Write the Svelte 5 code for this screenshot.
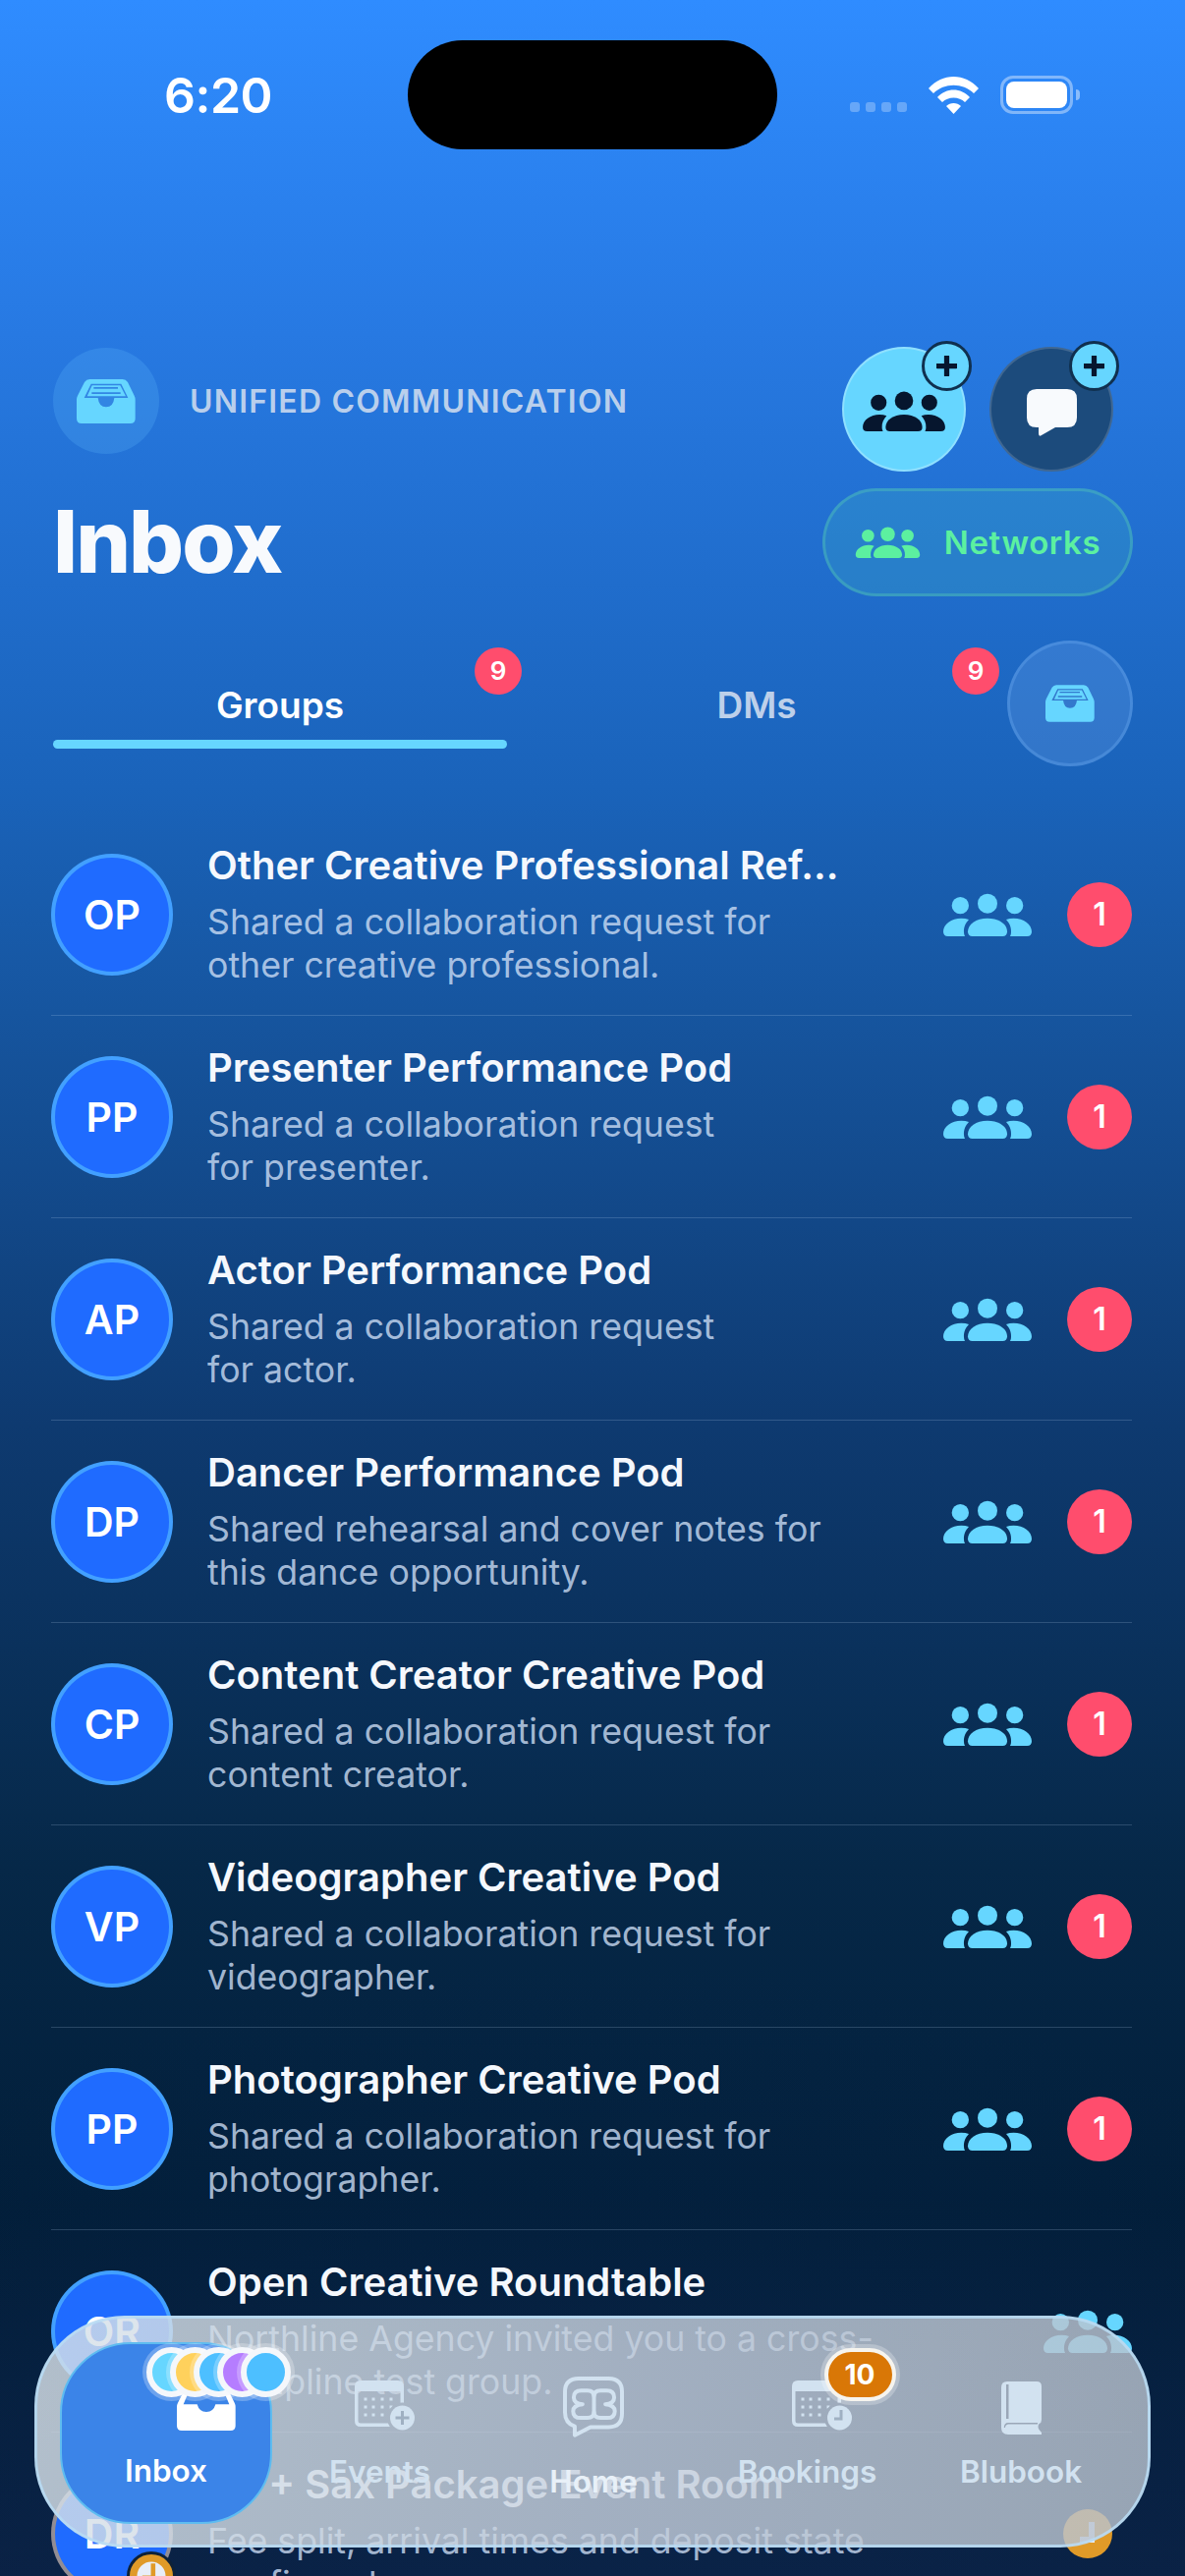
<script>
  const rows = [
    { code: "OP", title: "Other Creative Professional Ref...", sub: "Shared a collaboration request for\nother creative professional.", count: 1 },
    { code: "PP", title: "Presenter Performance Pod", sub: "Shared a collaboration request\nfor presenter.", count: 1 },
    { code: "AP", title: "Actor Performance Pod", sub: "Shared a collaboration request\nfor actor.", count: 1 },
    { code: "DP", title: "Dancer Performance Pod", sub: "Shared rehearsal and cover notes for\nthis dance opportunity.", count: 1 },
    { code: "CP", title: "Content Creator Creative Pod", sub: "Shared a collaboration request for\ncontent creator.", count: 1 },
    { code: "VP", title: "Videographer Creative Pod", sub: "Shared a collaboration request for\nvideographer.", count: 1 },
    { code: "PP", title: "Photographer Creative Pod", sub: "Shared a collaboration request for\nphotographer.", count: 1 },
    { code: "OR", title: "Open Creative Roundtable", sub: "Northline Agency invited you to a cross-\ndiscipline test group.", count: 0 },
    { code: "DR", title: "DJ + Sax Package Event Room", sub: "Fee split, arrival times and deposit state\nconfirmed.", count: 0, pending: true },
  ];

  const bubbles = ["#66d6ff", "#ffd15c", "#4dbfff", "#b57dff", "#4dbfff"];
</script>

{#snippet people(cls)}
  <svg class={cls} viewBox="0 0 270 132" aria-hidden="true">
    <circle cx="135" cy="32" r="30" />
    <circle cx="52" cy="38" r="26" />
    <circle cx="218" cy="38" r="26" />
    <path d="M75 118C75 95 100 77 135 77C170 77 195 95 195 118Q195 132 181 132H89Q75 132 75 118Z" />
    <path d="M0 118C0 95 25 77 55 77Q68 77 78 81C68 92 62 104 63 120Q63 127 66 132H14Q0 132 0 118Z" />
    <path d="M270 118C270 95 245 77 215 77Q202 77 192 81C202 92 208 104 207 120Q207 127 204 132H256Q270 132 270 118Z" />
  </svg>
{/snippet}

{#snippet tray(cls)}
  <svg class={cls} viewBox="0 0 180 135" aria-hidden="true">
    <path fill-rule="evenodd" d="M40 0H140Q150 0 156 9L176 50Q179 56 179 62V120Q179 135 164 135H15Q0 135 0 120V62Q0 56 3 50L24 9Q30 0 40 0Z
      M44 14H136L157 57H115Q112 85 90 85Q68 85 65 57H23Z
      M47 19H133L150 52H32Z
      M52 24H126V29H52Z
      M46 40H134V45H46Z" />
  </svg>
{/snippet}

{#snippet plus()}
  <span class="plus">
    <svg viewBox="0 0 20 20" aria-hidden="true"><path d="M10 1V19M1 10H19" /></svg>
  </span>
{/snippet}

{#snippet calendar(id, clock)}
  <svg class="cal" viewBox="0 0 62 51" aria-hidden="true">
    <mask {id}>
      <rect width="62" height="51" fill="#fff" />
      <circle cx="48.5" cy="38" r="15.5" fill="#000" />
    </mask>
    <g mask="url(#{id})">
      <path fill-rule="evenodd" d="M6 0H44Q50 0 50 6V41Q50 47 44 47H6Q0 47 0 41V6Q0 0 6 0ZM3.500 11V41Q3.500 43.500 6 43.500H44Q46.500 43.500 46.500 41V11Z" />
      {#each [19, 27, 35] as y}
        {#each [11, 19, 28, 37] as x}
          <rect x={x - 1.500} y={y - 1.500} width="3" height="3" />
        {/each}
      {/each}
    </g>
    <circle cx="48.500" cy="38" r="12.500" />
    {#if clock}
      <path class="cut" d="M50 30V39H43" />
    {:else}
      <path class="cut" d="M48.500 31V45M41.500 38H55.500" />
    {/if}
  </svg>
{/snippet}

<div class="screen">
  <div class="status">
    <span class="time">6:20</span>
    <div class="island"></div>
    <div class="sys">
      <div class="dots"><i></i><i></i><i></i><i></i></div>
      <svg class="wifi" viewBox="0 0 51 38" aria-hidden="true">
        <path d="M0 12C14 -4 37 -4 51 12L46 17C35 6 16 6 5 17Z" />
        <path d="M9 21C18 11 33 11 42 21L37 26C31 20 20 20 14 26Z" />
        <path d="M18 30C22 26 29 26 33 30L25.500 38Z" />
      </svg>
      <div class="battery"><b></b></div>
      <div class="cap"></div>
    </div>
  </div>

  <header class="head">
    <div class="head-left">
      <div class="brand">
        <span class="brand-ico">{@render tray("tray-h")}</span>
        <span class="eyebrow">UNIFIED COMMUNICATION</span>
      </div>
      <h1>Inbox</h1>
    </div>
    <div class="head-right">
      <div class="actions">
        <button class="act light">
          {@render people("ppl-dark")}
          {@render plus()}
        </button>
        <button class="act dark">
          <svg class="chat" viewBox="0 0 51 48" aria-hidden="true">
            <path d="M10 0H41Q51 0 51 10V29Q51 39 41 39H29L15 47Q12 49 12 45V39H10Q0 39 0 29V10Q0 0 10 0Z" />
          </svg>
          {@render plus()}
        </button>
      </div>
      <button class="networks">
        {@render people("ppl-green")}
        <span>Networks</span>
      </button>
    </div>
  </header>

  <div class="tabs">
    <div class="tab on">
      <span>Groups</span>
      <div class="line"></div>
      <em class="tab-badge">9</em>
    </div>
    <div class="tab two">
      <span>DMs</span>
      <em class="tab-badge">9</em>
    </div>
    <button class="archive">{@render tray("tray-s")}</button>
  </div>

  <div class="list">
    {#each rows as r}
      <div class="row">
        <div class="avatar" class:warm={r.pending}>
          {r.code}
          {#if r.pending}
            <span class="av-clock">
              <svg viewBox="0 0 24 24" aria-hidden="true"><circle cx="12" cy="12" r="11" /><path d="M13 5V13H7" /></svg>
            </span>
          {/if}
        </div>
        <div class="text">
          <div class="title">{r.title}</div>
          <div class="sub">{r.sub}</div>
        </div>
        <div class="slot">
          {#if r.pending}
            <span class="clock">
              <svg viewBox="0 0 50 50" aria-hidden="true"><path d="M29 13V31H17" /></svg>
            </span>
          {:else}
            {@render people("ppl-row")}
          {/if}
        </div>
        {#if r.count}
          <span class="count">{r.count}</span>
        {/if}
      </div>
    {/each}
  </div>

  <nav class="bar">
    <div class="item active">
      <div class="bubbles">
        {#each bubbles as c}
          <span style="background: {c}"></span>
        {/each}
      </div>
      <div class="ico ico-inbox">
        <svg class="tray-t" viewBox="0 0 180 135" aria-hidden="true">
          <path fill-rule="evenodd" d="M40 0H140Q150 0 156 9L176 50Q179 56 179 62V120Q179 135 164 135H15Q0 135 0 120V62Q0 56 3 50L24 9Q30 0 40 0Z
            M38 12H142L160 55H118Q112 78 90 78Q68 78 62 55H20Z" />
          <rect x="48" y="16" width="84" height="6" />
        </svg>
      </div>
      <span class="lbl">Inbox</span>
    </div>
    <div class="item">
      <div class="ico ico-events">{@render calendar("cal-a", false)}</div>
      <span class="lbl">Events</span>
    </div>
    <div class="item home">
      <div class="ico">
        <svg class="logo" viewBox="0 0 187 187" aria-hidden="true">
          <path d="M48 6H140Q181 6 181 47V114Q181 155 140 155H84L36 180V153Q6 143 6 110V47Q6 6 48 6Z" />
          <path d="M95 62Q95 43 75 43H56Q33 43 33 64Q33 83 60 85Q31 88 31 106Q31 127 55 127H75Q95 127 95 107Z" />
          <path d="M95 62Q95 43 115 43H134Q157 43 157 64Q157 83 130 85Q159 88 159 106Q159 127 135 127H115Q95 127 95 107" />
        </svg>
      </div>
      <span class="lbl">Home</span>
    </div>
    <div class="item">
      <div class="ico ico-book">{@render calendar("cal-b", true)}</div>
      <span class="lbl">Bookings</span>
      <span class="pill-badge">10</span>
    </div>
    <div class="item">
      <div class="ico">
        <svg class="book" viewBox="0 0 41 54" aria-hidden="true">
          <path fill-rule="evenodd" d="M6 0H36Q41 0 41 5V39Q41 42 38.500 43Q36.500 46 38.500 49L41 52V54H7Q0 54 0 47V6Q0 0 6 0ZM5 3H7.500V38H5ZM7 42H37V43.500H7Q4 44 4 47H2.800Q3 42 7 42Z" />
        </svg>
      </div>
      <span class="lbl">Blubook</span>
    </div>
  </nav>
</div>

<style>
  :global(body) {
    margin: 0;
    background: #021c36;
  }

  .screen {
    position: relative;
    width: 1206px;
    height: 2622px;
    overflow: hidden;
    font-family: Inter, "Liberation Sans", sans-serif;
    color: #fff;
    background:
      radial-gradient(ellipse 900px 500px at 50% 2500px, rgba(10, 40, 80, 0.35), rgba(0, 0, 0, 0) 100%),
      linear-gradient(180deg, #2f8cff 0, #2779e2 340px, #1a63ba 800px, #16559f 1030px, #0e3a70 1450px, #062848 1900px, #021e39 2250px, #0a2144 2622px);
  }

  /* status bar */
  .status {
    display: grid;
    grid-template-columns: 415px 376px 1fr;
    align-items: center;
    padding-top: 41px;
    height: 111px;
  }
  .time {
    padding-left: 167px;
    font-size: 50px;
    font-weight: 600;
    letter-spacing: -0.5px;
  }
  .island {
    height: 111px;
    border-radius: 56px;
    background: #000;
  }
  .sys {
    display: flex;
    align-items: flex-end;
    padding-left: 74px;
  }
  .dots {
    display: flex;
    gap: 6px;
    margin-bottom: 2px;
  }
  .dots i {
    width: 10px;
    height: 10px;
    border-radius: 3px;
    background: rgba(255, 255, 255, 0.28);
  }
  .wifi {
    width: 51px;
    height: 38px;
    margin-left: 22px;
    fill: #fff;
  }
  .battery {
    box-sizing: border-box;
    width: 74px;
    height: 39px;
    margin-left: 22px;
    padding: 3px;
    border: 3px solid rgba(255, 255, 255, 0.4);
    border-radius: 13px;
  }
  .battery b {
    display: block;
    height: 100%;
    border-radius: 8px;
    background: #fff;
  }
  .cap {
    width: 4px;
    height: 11px;
    margin: 0 0 14px 3px;
    border-radius: 0 4px 4px 0;
    background: rgba(255, 255, 255, 0.45);
  }

  /* header */
  .head {
    display: flex;
    justify-content: space-between;
    margin-top: 201px;
    padding: 0 53px;
  }
  .brand {
    display: flex;
    align-items: center;
    gap: 31px;
    margin-top: 1px;
  }
  .brand-ico {
    display: flex;
    align-items: center;
    justify-content: center;
    width: 108px;
    height: 108px;
    margin-left: 1px;
    border-radius: 50%;
    background: rgba(102, 190, 255, 0.22);
  }
  .tray-h {
    width: 60px;
    height: 45px;
    fill: #66d6ff;
  }
  .eyebrow {
    font-size: 32px;
    font-weight: 600;
    letter-spacing: 1.2px;
    color: #b9cfec;
  }
  h1 {
    margin: 43px 0 0 1px;
    font-size: 88px;
    line-height: 92px;
    font-weight: 800;
    letter-spacing: -2px;
    color: #f8fafd;
  }
  .head-right {
    display: flex;
    flex-direction: column;
    align-items: flex-end;
    gap: 17px;
  }
  .actions {
    display: flex;
    gap: 24px;
    margin-right: 20px;
  }
  .act {
    position: relative;
    box-sizing: border-box;
    display: flex;
    align-items: center;
    justify-content: center;
    width: 126px;
    height: 127px;
    padding: 0;
    border-radius: 50%;
    background-clip: border-box;
  }
  .act.light {
    background: #66d6ff;
    border: 2px solid #8fe0ff;
  }
  .act.dark {
    background: #1c4b7c;
    border: 2px solid rgba(255, 255, 255, 0.16);
  }
  .ppl-dark {
    width: 84px;
    height: 41px;
    margin-top: 3px;
    fill: #06162e;
  }
  .chat {
    width: 51px;
    height: 48px;
    margin-top: 6px;
    fill: #f8fafd;
  }
  .plus {
    position: absolute;
    top: -8px;
    right: -8px;
    box-sizing: border-box;
    display: flex;
    align-items: center;
    justify-content: center;
    width: 51px;
    height: 51px;
    border-radius: 50%;
    background: #66d6ff;
    border: 3px solid #10304f;
  }
  .plus svg {
    width: 21px;
    height: 21px;
    fill: none;
    stroke: #06162e;
    stroke-width: 5;
    stroke-linecap: round;
  }
  .networks {
    box-sizing: border-box;
    display: flex;
    align-items: center;
    justify-content: center;
    gap: 24px;
    width: 316px;
    height: 110px;
    padding: 0;
    border-radius: 55px;
    border: 3px solid rgba(82, 200, 180, 0.4);
    background: rgba(70, 190, 190, 0.22);
    font-family: inherit;
    font-size: 33px;
    font-weight: 600;
    letter-spacing: 0.6px;
    color: #5cf0a0;
  }
  .ppl-green {
    width: 67px;
    height: 32px;
    fill: #5cf0a0;
  }

  /* tabs */
  .tabs {
    display: flex;
    margin-top: 45px;
    padding-left: 54px;
    gap: 30px;
  }
  .tab {
    position: relative;
    box-sizing: border-box;
    display: flex;
    flex-direction: column;
    align-items: center;
    width: 462px;
    padding-top: 44px;
    font-size: 37px;
    font-weight: 600;
    line-height: 44px;
    color: #bdd0ea;
  }
  .tab.on {
    color: #fff;
  }
  .tab.two {
    width: 448px;
  }
  .line {
    align-self: stretch;
    height: 9px;
    margin-top: 13px;
    border-radius: 5px;
    background: #66d6ff;
  }
  .tab-badge {
    position: absolute;
    top: 7px;
    left: 429px;
    width: 48px;
    height: 48px;
    border-radius: 50%;
    background: #ff4d6d;
    color: #fff;
    font-style: normal;
    font-size: 26px;
    font-weight: 600;
    line-height: 48px;
    text-align: center;
  }
  .tab.two .tab-badge {
    left: 423px;
  }
  .archive {
    box-sizing: border-box;
    display: flex;
    align-items: center;
    justify-content: center;
    flex: none;
    width: 128px;
    height: 128px;
    margin-left: 1px;
    padding: 0;
    border-radius: 50%;
    border: 3px solid rgba(120, 180, 250, 0.3);
    background: rgba(120, 170, 240, 0.25);
  }
  .tray-s {
    width: 50px;
    height: 38px;
    fill: #66d6ff;
  }

  /* rows */
  .list {
    margin-top: 48px;
    padding: 0 54px 0 52px;
  }
  .row {
    box-sizing: border-box;
    display: flex;
    align-items: center;
    height: 206px;
    border-bottom: 1px solid rgba(190, 215, 245, 0.2);
  }
  .avatar {
    position: relative;
    box-sizing: border-box;
    flex: none;
    display: flex;
    align-items: center;
    justify-content: center;
    width: 124px;
    height: 124px;
    border-radius: 50%;
    border: 4px solid rgba(102, 214, 255, 0.5);
    background: #1f6bff;
    font-size: 41px;
    font-weight: 600;
  }
  .avatar.warm {
    border-color: rgba(240, 170, 60, 0.55);
  }
  .av-clock {
    position: absolute;
    right: -7px;
    bottom: -10px;
    box-sizing: border-box;
    display: flex;
    width: 50px;
    height: 50px;
    border-radius: 50%;
    background: #e09a28;
    border: 3px solid #0f2238;
  }
  .av-clock svg {
    width: 100%;
    height: 100%;
  }
  .av-clock circle {
    fill: #e8eef8;
    transform: scale(0.72);
    transform-origin: center;
  }
  .av-clock path {
    fill: none;
    stroke: #e09a28;
    stroke-width: 2.500;
  }
  .text {
    flex: 1;
    min-width: 0;
    margin-left: 35px;
  }
  .title {
    font-size: 40px;
    line-height: 46px;
    font-weight: 600;
    white-space: nowrap;
    color: #f5f8fd;
  }
  .sub {
    margin-top: 12px;
    font-size: 35.7px;
    line-height: 44px;
    font-weight: 400;
    white-space: pre-line;
    color: rgba(205, 222, 245, 0.8);
  }
  .slot {
    flex: none;
    display: flex;
    justify-content: center;
    width: 90px;
  }
  .ppl-row {
    width: 90px;
    height: 44px;
    fill: #66d6ff;
  }
  .clock {
    display: flex;
    width: 50px;
    height: 50px;
    border-radius: 50%;
    background: #e09a28;
  }
  .clock path {
    fill: none;
    stroke: #e8eef8;
    stroke-width: 6;
  }
  .count {
    flex: none;
    width: 66px;
    height: 66px;
    margin-left: 36px;
    border-radius: 50%;
    background: #ff4d6d;
    color: #fff;
    font-size: 32px;
    font-weight: 600;
    line-height: 66px;
    text-align: center;
  }

  /* floating tab bar */
  .bar {
    position: absolute;
    top: 2357px;
    left: 35px;
    box-sizing: border-box;
    display: flex;
    gap: 1.500px;
    width: 1136px;
    height: 236px;
    padding: 24px 0 0 23px;
    border-radius: 92px;
    border: 3px solid rgba(185, 220, 245, 0.85);
    background: linear-gradient(100deg, rgba(216, 226, 234, 0.82), rgba(196, 206, 220, 0.82) 55%, rgba(183, 193, 205, 0.82));
  }
  .item {
    position: relative;
    box-sizing: border-box;
    display: flex;
    flex-direction: column;
    align-items: center;
    flex: none;
    width: 216px;
    height: 185px;
    padding-top: 40px;
    color: #d2e2f0;
  }
  .item.active {
    color: #fff;
    background: #3b84e8;
    border: 2px solid #5ebcf0;
    border-radius: 72px;
    padding-top: 38px;
  }
  .ico {
    display: flex;
    align-items: flex-end;
    justify-content: center;
    height: 50px;
    fill: currentColor;
  }
  .ico-inbox {
    margin-left: 82px;
    margin-bottom: -1px;
  }
  .ico-events {
    margin-left: 10px;
  }
  .ico-book {
    margin-left: 30px;
  }
  .lbl {
    margin-top: 24px;
    font-size: 31.5px;
    font-weight: 600;
    line-height: 36px;
  }
  .tray-t {
    width: 60px;
    height: 45px;
    fill: #fff;
  }
  .cal {
    width: 62px;
    height: 51px;
    fill: #d2e2f0;
  }
  .cut {
    fill: none;
    stroke: #9fb0c2;
    stroke-width: 3;
  }
  .logo {
    width: 62px;
    height: 62px;
    margin-bottom: -7px;
    fill: none;
    stroke: #d2e2f0;
    stroke-width: 12;
    stroke-linejoin: round;
  }
  .home .lbl {
    margin-top: 34px;
    color: #e8f0f8;
  }
  .book {
    width: 41px;
    height: 54px;
    margin-bottom: -4px;
    fill: #d2e2f0;
  }
  .bubbles {
    position: absolute;
    top: 3px;
    left: 86px;
    display: flex;
  }
  .bubbles span {
    box-sizing: content-box;
    flex: none;
    width: 39px;
    height: 39px;
    margin-right: -27px;
    border: 6px solid #f4f7fb;
    border-radius: 50%;
    box-shadow: 0 0 0 4px rgba(255, 255, 255, 0.25);
  }
  .pill-badge {
    position: absolute;
    top: 6px;
    left: 125px;
    box-sizing: border-box;
    width: 73px;
    height: 54px;
    border: 4px solid #f6f4ee;
    border-radius: 27px;
    background: #d97706;
    box-shadow: 0 0 0 4px rgba(255, 255, 255, 0.25);
    color: #fff;
    font-size: 28px;
    font-weight: 700;
    line-height: 46px;
    text-align: center;
  }
</style>
